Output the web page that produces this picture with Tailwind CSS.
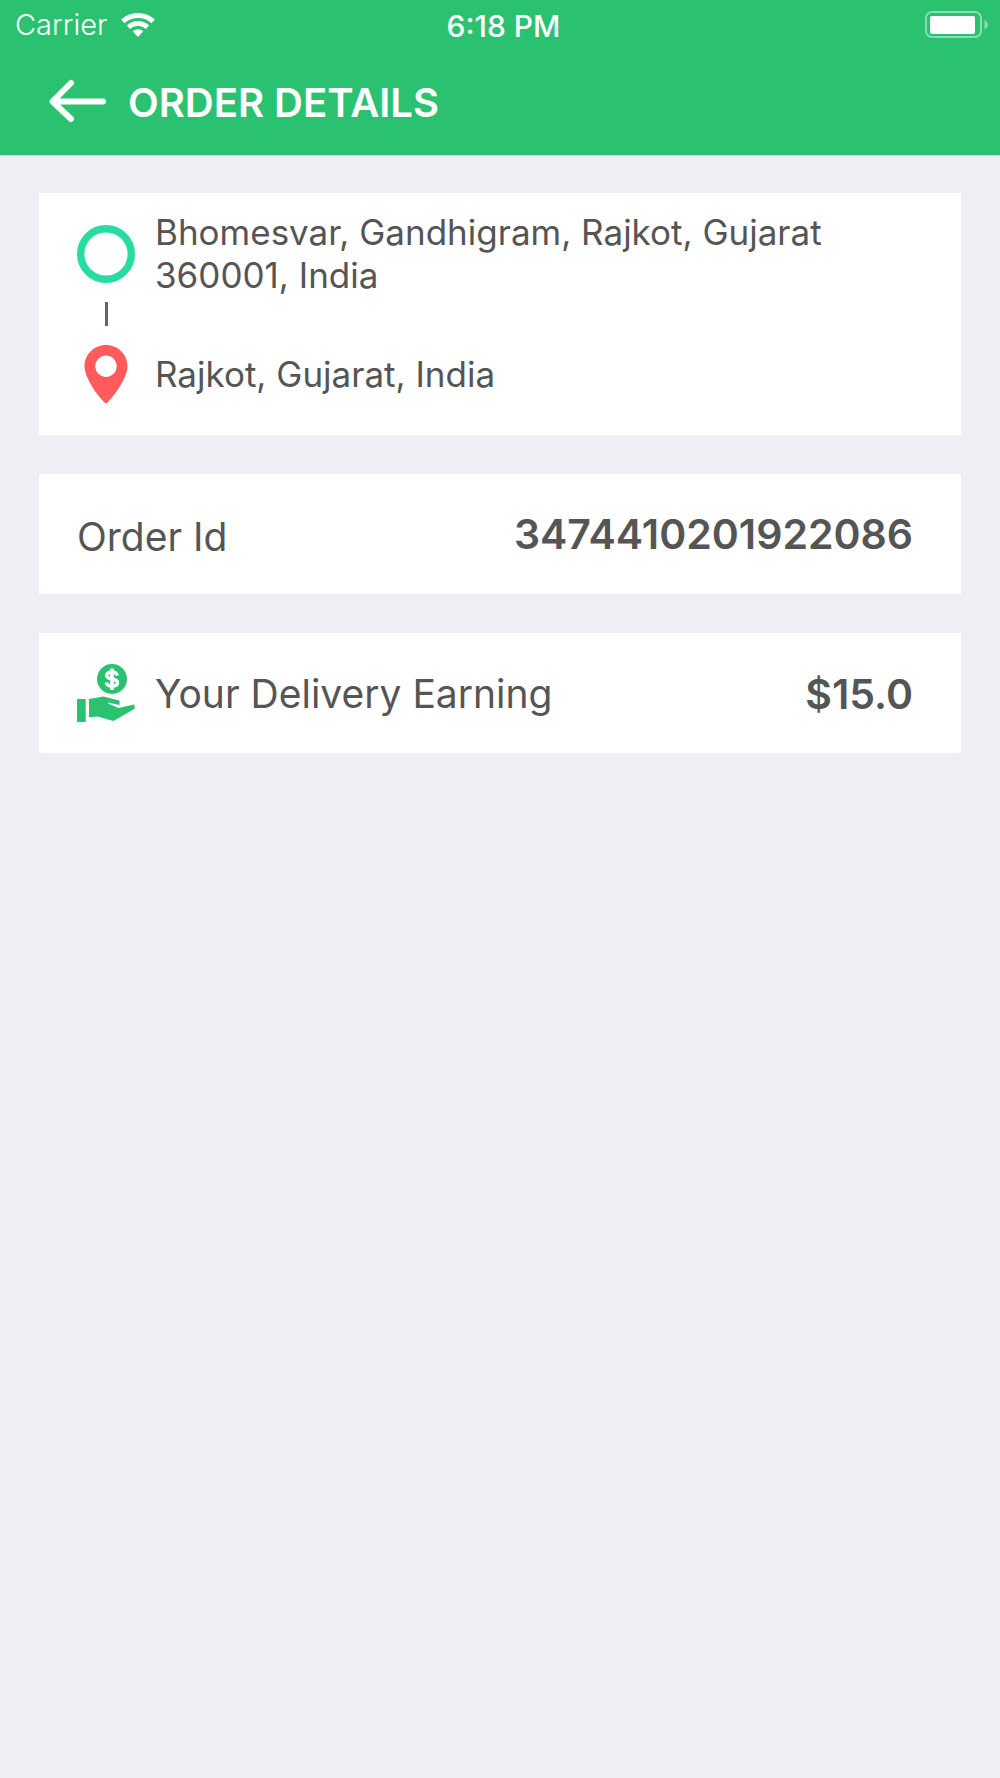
<!DOCTYPE html>
<html lang="en">
<head>
    <meta charset="UTF-8">
    <meta name="viewport" content="width=device-width, initial-scale=1.0">
    <title>Order Details</title>
    <script src="https://cdn.jsdelivr.net/npm/@tailwindcss/browser@4"></script>
</head>
<body class="min-h-screen bg-[#efeef4] font-['Inter',sans-serif] text-[#555555]">
    <header class="bg-[#2ac271] text-white border-b border-[#c9d3d2]">
        <!-- Status bar -->
        <div class="grid grid-cols-3 items-center h-[50px] pl-[15px] pr-3">
            <div class="flex items-center gap-[14px]">
                <span class="text-[29px] leading-[34px] font-light">Carrier</span>
                <svg class="w-[34px] h-6" viewBox="0 0 34 24" fill="currentColor" aria-label="Wi-Fi">
                    <path d="M17 0C10.400 0 4.600 2.500 0.200 6.600L3.500 10.200C7.100 6.900 11.800 5 17 5s9.900 1.900 13.500 5.200L33.800 6.600C29.400 2.500 23.600 0 17 0z"/>
                    <path d="M17 8c-4.300 0-8.200 1.700-11.200 4.500L9.100 16C11.200 14.100 13.900 12.900 17 12.900S22.800 14.100 24.900 16l3.300-3.500C25.200 9.700 21.300 8 17 8z"/>
                    <path d="M17 16.200c-2 0-3.800.8-5.200 2L17 24l5.200-5.800c-1.400-1.200-3.200-2-5.200-2z"/>
                </svg>
            </div>
            <span class="pt-px pl-1 text-[30px] leading-[34px] font-medium text-center">6:18 PM</span>
            <svg class="w-[63px] h-7 justify-self-end" viewBox="0 0 63 28" aria-label="Battery full">
                <rect x="1" y="1" width="55" height="25" rx="6" fill="none" stroke="#8adcb0" stroke-width="2"/>
                <rect x="5" y="5" width="45" height="18" rx="2" fill="#fff"/>
                <path d="M59.500 8.800c2 1 3.300 2.800 3.300 4.900s-1.300 3.900-3.300 4.900z" fill="#8adcb0"/>
            </svg>
        </div>
        <!-- Title bar -->
        <div class="flex items-center gap-[22px] h-[105px] pl-12 pb-1">
            <button type="button" aria-label="Back">
                <svg class="w-[58px] h-11" viewBox="0 0 58 44" fill="none" stroke="currentColor" stroke-width="6" stroke-linecap="round" stroke-linejoin="round">
                    <path d="M23 4L4.500 22.500L23 40M5 22.500H55"/>
                </svg>
            </button>
            <h1 class="pt-1 text-[40px] leading-[48px] font-semibold">ORDER DETAILS</h1>
        </div>
    </header>

    <main class="flex flex-col gap-[39px] px-[39px] py-[37px]">
        <!-- Pickup and drop-off -->
        <section class="bg-white px-[38px] pt-[18px] pb-8 text-[35px] leading-[43px]">
            <div class="flex items-center gap-5">
                <svg class="w-[58px] h-[58px] shrink-0" viewBox="0 0 58 58" aria-label="Pickup">
                    <circle cx="29" cy="29" r="25.300" fill="none" stroke="#26dd9f" stroke-width="7.400"/>
                </svg>
                <p>Bhomesvar, Gandhigram, Rajkot, Gujarat 360001, India</p>
            </div>
            <div class="flex justify-center w-[59px] pt-[5px] pb-[19px]">
                <div class="w-[3px] h-6 bg-[#666666]"></div>
            </div>
            <div class="flex items-center gap-5">
                <svg class="w-[58px] h-[58px] shrink-0" viewBox="0 0 58 58" aria-label="Drop-off">
                    <path fill="#ff5b5b" fill-rule="evenodd" d="M29 0C17.100 0 7.500 9.400 7.500 21.200C7.500 32 19 48.500 27.300 57.300Q29 59 30.700 57.300C39 48.500 50.500 32 50.500 21.200C50.500 9.400 40.900 0 29 0zM29 10.500a10.700 10.700 0 1 1 0 21.400a10.700 10.700 0 1 1 0-21.400z"/>
                </svg>
                <p>Rajkot, Gujarat, India</p>
            </div>
        </section>

        <section class="flex items-center justify-between bg-white h-[120px] pl-[38px] pr-12 leading-[48px]">
            <span class="pt-1.5 text-[39px]">Order Id</span>
            <span class="text-[41px] font-semibold">3474410201922086</span>
        </section>

        <section class="flex items-center justify-between bg-white h-[120px] pl-[38px] pr-12 leading-[48px]">
            <div class="flex items-center gap-5">
                <svg class="w-[58px] h-[58px] shrink-0" viewBox="0 0 58 58" aria-hidden="true">
                    <circle cx="35" cy="15" r="15" fill="#2ac271"/>
                    <path d="M40.300 11.500C39.500 9 37.500 8 35 8C32 8 29.700 9.300 29.700 11.500C29.700 16.500 40.500 13.300 40.500 18.600C40.500 21 38 22.200 35 22.200C32 22.200 29.800 21 29.300 18.500M35 4.500V26" fill="none" stroke="#fff" stroke-width="3.600"/>
                    <path d="M0 35h8.700v23H0zM12 35L26.500 32.500L42.500 36.500V41L31 38.500L31 39.500L41.500 44L57 40.500L58 44.500L36.500 57L20.500 52.500L12 53.300z" fill="#2ac271"/>
                </svg>
                <span class="pt-0.5 text-[39px]">Your Delivery Earning</span>
            </div>
            <span class="pt-0.5 text-[41px] font-semibold">$15.0</span>
        </section>
    </main>
</body>
</html>
